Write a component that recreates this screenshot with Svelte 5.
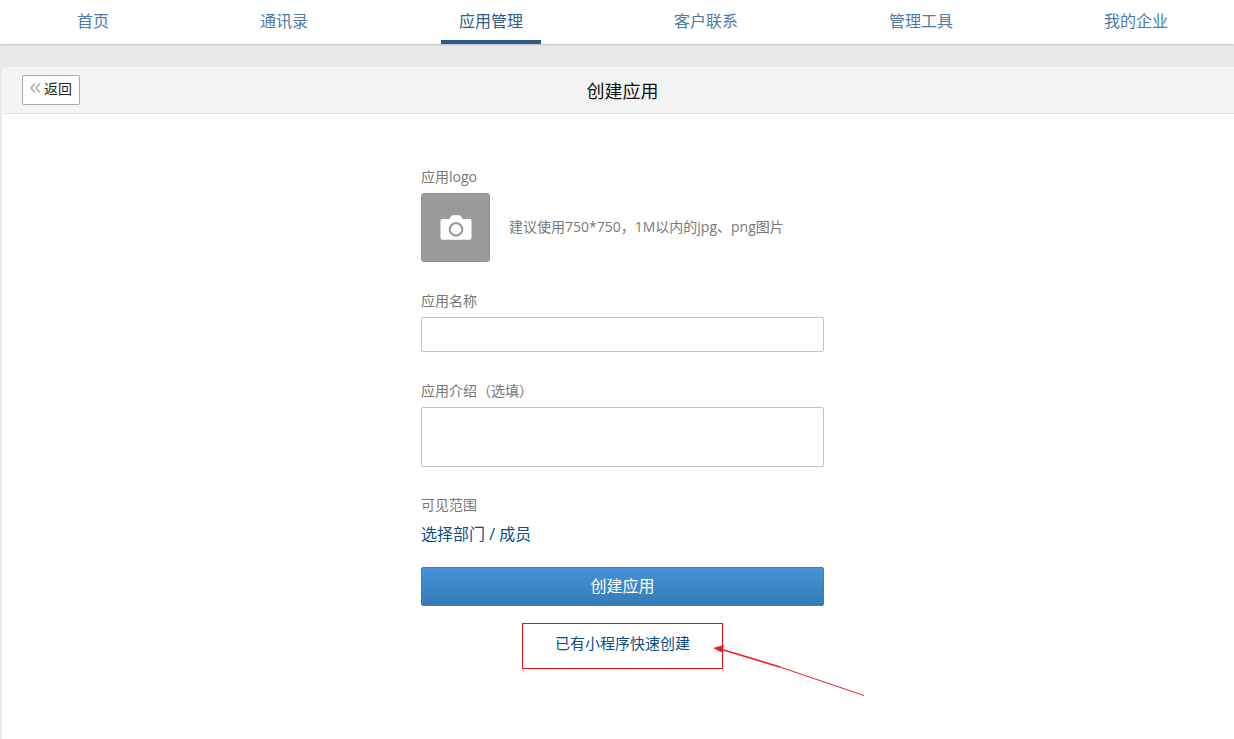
<script>
  const tabs = ["首页", "通讯录", "应用管理", "客户联系", "管理工具", "我的企业"];
  const activeTab = "应用管理";
</script>

<nav class="topnav">
  {#each tabs as tab}
    <a class="tab" class:active={tab === activeTab} href="#top">{tab}</a>
  {/each}
</nav>

<main class="page">
  <section class="card">
    <header class="card-head">
      <button class="back" type="button">
        <svg width="11" height="10" viewBox="0 0 11 10" fill="none" stroke="#a8a8a8" stroke-width="1.5">
          <path d="M5 0.5 L1 5 L5 9.5" />
          <path d="M10 0.5 L6 5 L10 9.5" />
        </svg>
        返回
      </button>
      <h1>创建应用</h1>
    </header>

    <form class="form">
      <div class="label first">应用logo</div>
      <div class="logo-row">
        <div class="logo-box">
          <svg width="32" height="25" viewBox="0 0 34 26">
            <path fill="#fff" d="M2.5 4 H10 L12 0.8 Q12.4 0 13.4 0 H20.6 Q21.6 0 22 0.8 L24 4 H31.5 Q33.5 4 33.5 6 V24 Q33.5 26 31.5 26 H2.5 Q0.5 26 0.5 24 V6 Q0.5 4 2.5 4 Z" />
            <circle cx="17" cy="15" r="6.6" fill="none" stroke="#9b9b9b" stroke-width="2.4" />
          </svg>
        </div>
        <span class="hint">建议使用750*750，1M以内的jpg、png图片</span>
      </div>

      <label class="label" for="app-name">应用名称</label>
      <input id="app-name" class="field" type="text" />

      <label class="label" for="app-intro">应用介绍（选填）</label>
      <textarea id="app-intro" class="field area"></textarea>

      <div class="label scope">可见范围</div>
      <a class="pick" href="#top">选择部门 / 成员</a>

      <button class="submit" type="button">创建应用</button>
      <a class="quick" href="#top">已有小程序快速创建</a>
    </form>
  </section>
</main>

<!-- red markup drawn on top of the screenshot -->
<svg class="markup" width="1234" height="739" viewBox="0 0 1234 739" fill="none">
  <rect x="522.5" y="623.5" width="200" height="45" stroke="#e8141c" stroke-width="1" />
  <path d="M864 695.5 L780 667" stroke="#ee1c25" stroke-width="1" />
  <path d="M780 667 L722 649.5" stroke="#ee1c25" stroke-width="1.8" />
  <path d="M713 648 L724 645 L722 652.5 Z" fill="#ee1c25" />
</svg>

<style>
  :global(body) {
    background: #e8e9eb;
    overflow: hidden;
  }
  * {
    box-sizing: border-box;
    margin: 0;
  }
  :global(#app) {
    font-family: "Open Sans", "Noto Sans CJK SC", sans-serif;
  }
  .topnav {
    display: grid;
    grid-template-columns: 186px 196px 218px 212px 218px 212px;
    height: 44px;
    width: 1234px;
    overflow: hidden;
    background: #fff;
    box-shadow: 0 1px 2px rgba(0, 0, 0, 0.18);
    position: relative;
  }
  .tab {
    justify-self: center;
    width: 100px;
    height: 44px;
    line-height: 42px;
    text-align: center;
    font-size: 16px;
    color: #4d7aa6;
    text-decoration: none;
  }
  .tab.active {
    color: #2f5c88;
    border-bottom: 4px solid #2b5a88;
  }
  .page {
    padding: 23px 0 0 2px;
  }
  .card {
    height: 672px;
    background: #fff;
    border-radius: 4px 0 0 0;
    overflow: hidden;
  }
  .card-head {
    height: 47px;
    background: #f4f4f4;
    border-bottom: 1px solid #e2e2e2;
    padding: 8px 0 0 20px;
    position: relative;
  }
  .card-head h1 {
    position: absolute;
    left: 9px;
    right: 0;
    top: 11px;
    text-align: center;
    font-size: 18px;
    line-height: 26px;
    font-weight: 400;
    color: #111;
  }
  .back {
    display: flex;
    align-items: center;
    gap: 3px;
    width: 58px;
    height: 30px;
    padding: 0 0 4px 7px;
    background: #fff;
    border: 1px solid #aaa;
    border-radius: 2px;
    font: inherit;
    font-size: 14px;
    color: #222;
  }
  .form {
    width: 403px;
    margin-left: 419px;
    display: flex;
    flex-direction: column;
  }
  .label {
    font-size: 14px;
    line-height: 18px;
    color: #777;
    margin-top: 30px;
    margin-bottom: 7px;
  }
  .label.first {
    margin-top: 54px;
  }
  .logo-row {
    display: flex;
    align-items: center;
    gap: 19px;
  }
  .logo-box {
    width: 69px;
    height: 69px;
    background: #9b9b9b;
    border: 1px solid #8f8f8f;
    border-radius: 3px;
    display: flex;
    align-items: center;
    justify-content: center;
  }
  .hint {
    font-size: 14px;
    line-height: 18px;
    margin-top: -2px;
    color: #777;
  }
  .field {
    display: block;
    width: 403px;
    height: 35px;
    border: 1px solid #c4c4c4;
    border-radius: 2px;
    background: #fff;
    resize: none;
  }
  .area {
    height: 60px;
  }
  .label.scope {
    margin-top: 29px;
    margin-bottom: 8px;
  }
  .pick {
    font-size: 16px;
    line-height: 24px;
    color: #0b4d86;
    text-decoration: none;
  }
  .submit {
    margin-top: 21px;
    height: 39px;
    border: 1px solid #3a7fba;
    border-radius: 2px;
    background: linear-gradient(#4493d6, #357cb6);
    color: #fff;
    font: inherit;
    font-size: 16px;
    padding-bottom: 4px;
  }
  .quick {
    margin-top: 26px;
    text-align: center;
    font-size: 15px;
    line-height: 22px;
    color: #0b4d86;
    text-decoration: none;
  }
  .markup {
    position: absolute;
    left: 0;
    top: 0;
    pointer-events: none;
  }
</style>
